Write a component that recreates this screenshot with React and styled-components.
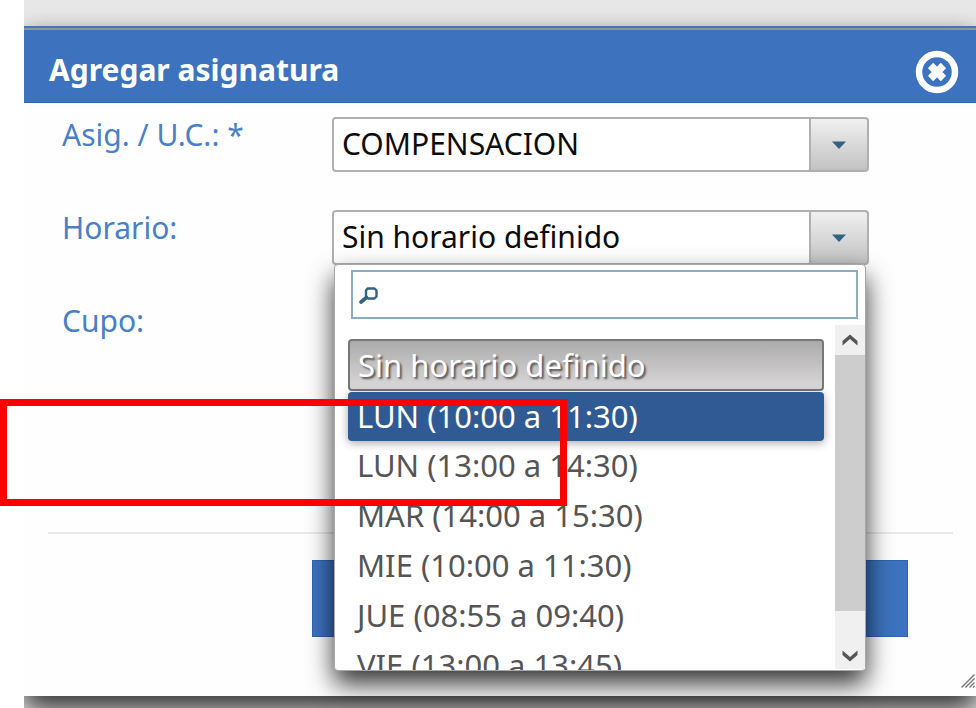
import React, { useState } from 'react';
import styled, { createGlobalStyle, css } from 'styled-components';

const GlobalStyle = createGlobalStyle`
  * {
    box-sizing: border-box;
  }
  body {
    margin: 0;
    background: #fff;
    font-family: 'Noto Sans', sans-serif;
    font-size: 30px;
  }
  button, input, select {
    font: inherit;
  }
`;

const Page = styled.div`
  position: relative;
  min-height: 100vh;
  padding-left: 24px;
`;

const Backdrop = styled.div`
  min-height: 100vh;
  padding: 26px 0 12px;
  background: #e8e8e8;
  overflow: hidden;
  display: flex;
  flex-direction: column;
`;

const Dialog = styled.section`
  flex: 1;
  display: flex;
  flex-direction: column;
  background: #fefefe;
  border-top: 2px solid #4476b9;
  box-shadow: 0 13px 26px rgba(0, 0, 0, 0.8);
`;

const Header = styled.header`
  display: flex;
  align-items: center;
  justify-content: space-between;
  height: 75px;
  padding: 8px 17px 0 25px;
  background: #3d72be;
  border-top: 2px solid #8c969e;
  border-bottom: 1px solid #2c65b4;
`;

const Title = styled.h1`
  margin: 0;
  color: #fff;
  font-size: 30px;
  font-weight: 700;
  line-height: 40px;
`;

const CloseButton = styled.button`
  display: flex;
  padding: 4px 0 0;
  border: none;
  background: none;
  cursor: pointer;
`;

const Form = styled.form`
  flex: 1;
  display: flex;
  flex-direction: column;
`;

const Fields = styled.div`
  display: grid;
  grid-template-columns: 270px minmax(0, 1fr);
  row-gap: 38px;
  padding: 14px 107px 0 38px;
`;

const Label = styled.label`
  color: #4a7fca;
  line-height: 36px;
`;

const Field = styled.div`
  position: relative;
  height: 55px;
`;

const Combo = styled.div`
  display: flex;
  height: 55px;
  border: 2px solid #b0b0b0;
  border-radius: 4px;
  background: linear-gradient(#f0f0f0, #c2c2c2);
  overflow: hidden;
`;

const Select = styled.select`
  flex: 1;
  min-width: 0;
  appearance: none;
  padding: 0 8px 2px;
  border: none;
  border-right: 2px solid #b0b0b0;
  border-radius: 0;
  outline: none;
  background: #fff;
  color: #0c0c0c;
`;

const Trigger = styled.span`
  flex: 0 0 56px;
  display: flex;
  align-items: center;
  justify-content: center;
`;

const TextInput = styled.input`
  width: 50%;
  height: 55px;
  margin-left: 4px;
  padding: 0 8px;
  border: 2px solid #b0b0b0;
  border-radius: 4px;
`;

const Panel = styled.div`
  position: absolute;
  z-index: 2;
  top: 54px;
  left: 2px;
  right: 3px;
  height: 407px;
  display: flex;
  flex-direction: column;
  border: 1px solid #a8a8a8;
  border-radius: 4px;
  background: #fff;
  box-shadow: 0 13px 26px rgba(0, 0, 0, 0.8);
`;

const Search = styled.div`
  display: flex;
  align-items: center;
  height: 49px;
  margin: 5px 7px 6px 16px;
  padding: 2px 0 0 6px;
  border: 2px solid #8badc0;
`;

const SearchInput = styled.input`
  flex: 1;
  min-width: 0;
  padding: 0 8px;
  border: none;
  outline: none;
  background: none;
`;

const ListArea = styled.div`
  flex: 1;
  min-height: 0;
  display: flex;
`;

const Options = styled.ul`
  flex: 1;
  margin: 0;
  padding: 14px 11px 0 13px;
  list-style: none;
  font-size: 31px;
  overflow: hidden;
`;

const Option = styled.li`
  height: 50px;
  padding-left: 9px;
  border-radius: 4px;
  color: #555;
  line-height: 48px;
  white-space: nowrap;
  cursor: pointer;

  ${({ $state }) => $state === 'selected' && css`
    height: 52px;
    margin-bottom: 1px;
    border: 2px solid #777;
    padding-left: 8px;
    background: linear-gradient(#acabab, #dad8d9);
    color: #fff;
    text-shadow: 2px 2px 2px #555;
  `}

  ${({ $state }) => $state === 'hover' && css`
    height: 49px;
    background: #2f5a93;
    color: #fff;
    box-shadow: 0 2px 10px rgba(0, 0, 0, 0.35);
  `}
`;

const Scrollbar = styled.div`
  flex: 0 0 30px;
  display: flex;
  flex-direction: column;
  margin-bottom: 1px;
  background: #f0f0f0;
`;

const ScrollButton = styled.button`
  display: flex;
  align-items: center;
  justify-content: center;
  height: ${({ $height }) => $height}px;
  padding: 0;
  border: none;
  background: none;
`;

const ScrollTrack = styled.div`
  flex: 1;
`;

const ScrollThumb = styled.div`
  height: 256px;
  background: #cdcdcd;
`;

const Footer = styled.footer`
  display: flex;
  margin: auto 23px 59px 24px;
  padding: 26px 45px 0 264px;
  border-top: 2px solid #e9e9e9;
`;

const SubmitButton = styled.button`
  flex: 1;
  height: 77px;
  border: 1px solid #2c65b4;
  background: #3d72be;
  color: #fff;
`;

const Grip = styled.svg`
  position: absolute;
  right: 1px;
  bottom: 20px;
`;

const Highlight = styled.div`
  position: absolute;
  z-index: 3;
  top: 399px;
  left: 0;
  width: 567px;
  height: 107px;
  border: 7px solid #f00;
  pointer-events: none;
`;

const horarios = [
  'Sin horario definido',
  'LUN (10:00 a 11:30)',
  'LUN (13:00 a 14:30)',
  'MAR (14:00 a 15:30)',
  'MIE (10:00 a 11:30)',
  'JUE (08:55 a 09:40)',
  'VIE (13:00 a 13:45)',
];

const CloseIcon = () => (
  <svg width="44" height="44" viewBox="0 0 44 44" fill="none" stroke="#fff">
    <circle cx="22" cy="22" r="18" strokeWidth="6.5" />
    <path d="M15.5 15.5L28.5 28.5M28.5 15.5L15.5 28.5" strokeWidth="7.5" />
  </svg>
);

const CaretIcon = () => (
  <svg width="14" height="8" viewBox="0 0 14 8">
    <path d="M0 0.5H14L7 8Z" fill="#32647f" />
  </svg>
);

const SearchIcon = () => (
  <svg width="19" height="17" viewBox="0 0 19 17" fill="none" stroke="#32647f">
    <path d="M8.5 1.5H15.5L17.5 3.5V9.5L15.5 11.5H9L7 9.5V3.5Z" strokeWidth="2.4" strokeLinejoin="round" />
    <path d="M7.5 10.5L2 15" strokeWidth="3.6" strokeLinecap="round" />
  </svg>
);

const Chevron = ({ down }) => (
  <svg width="16" height="12" viewBox="0 0 16 12">
    <path
      d={down ? 'M0.5 0.5L8 7L15.5 0.5V5L8 11.5L0.5 5Z' : 'M0.5 11.5L8 5L15.5 11.5V7L8 0.5L0.5 7Z'}
      fill="#555"
    />
  </svg>
);

const App = () => {
  const [horario, setHorario] = useState(horarios[0]);
  const [active, setActive] = useState(horarios[1]);
  const [filter, setFilter] = useState('');

  const stateOf = (item) => {
    if (item === horario) return 'selected';
    return item === active ? 'hover' : 'normal';
  };

  return (
    <Page>
      <GlobalStyle />
      <Backdrop>
        <Dialog role="dialog" aria-labelledby="titulo">
          <Header>
            <Title id="titulo">Agregar asignatura</Title>
            <CloseButton type="button" aria-label="Cerrar">
              <CloseIcon />
            </CloseButton>
          </Header>
          <Form onSubmit={(e) => e.preventDefault()}>
            <Fields>
              <Label htmlFor="asignatura">Asig. / U.C.: *</Label>
              <Field>
                <Combo>
                  <Select id="asignatura">
                    <option>COMPENSACION</option>
                  </Select>
                  <Trigger><CaretIcon /></Trigger>
                </Combo>
              </Field>
              <Label htmlFor="horario">Horario:</Label>
              <Field>
                <Combo>
                  <Select id="horario" value={horario} onChange={(e) => setHorario(e.target.value)}>
                    {horarios.map((item) => <option key={item}>{item}</option>)}
                  </Select>
                  <Trigger><CaretIcon /></Trigger>
                </Combo>
                <Panel>
                  <Search>
                    <SearchIcon />
                    <SearchInput
                      type="text"
                      aria-label="Buscar horario"
                      value={filter}
                      onChange={(e) => setFilter(e.target.value)}
                    />
                  </Search>
                  <ListArea>
                    <Options role="listbox" aria-label="Horario">
                      {horarios
                        .filter((item) => item.toLowerCase().includes(filter.toLowerCase()))
                        .map((item) => (
                          <Option
                            key={item}
                            role="option"
                            aria-selected={item === horario}
                            $state={stateOf(item)}
                            onMouseEnter={() => setActive(item)}
                            onClick={() => setHorario(item)}
                          >
                            {item}
                          </Option>
                        ))}
                    </Options>
                    <Scrollbar>
                      <ScrollButton type="button" aria-label="Subir" $height={30}>
                        <Chevron />
                      </ScrollButton>
                      <ScrollTrack><ScrollThumb /></ScrollTrack>
                      <ScrollButton type="button" aria-label="Bajar" $height={26}>
                        <Chevron down />
                      </ScrollButton>
                    </Scrollbar>
                  </ListArea>
                </Panel>
              </Field>
              <Label htmlFor="cupo">Cupo:</Label>
              <Field>
                <TextInput id="cupo" type="text" />
              </Field>
            </Fields>
            <Footer>
              <SubmitButton type="submit" aria-label="Agregar" />
            </Footer>
          </Form>
        </Dialog>
      </Backdrop>
      <Grip width="14" height="14" viewBox="0 0 14 14" stroke="#777" strokeWidth="1.4">
        <path d="M0.5 13.5L13.5 0.5M4.5 13.5L13.5 4.5M8.5 13.5L13.5 8.5M12 13.5L13.5 12" />
      </Grip>
      <Highlight />
    </Page>
  );
};

export default App;
